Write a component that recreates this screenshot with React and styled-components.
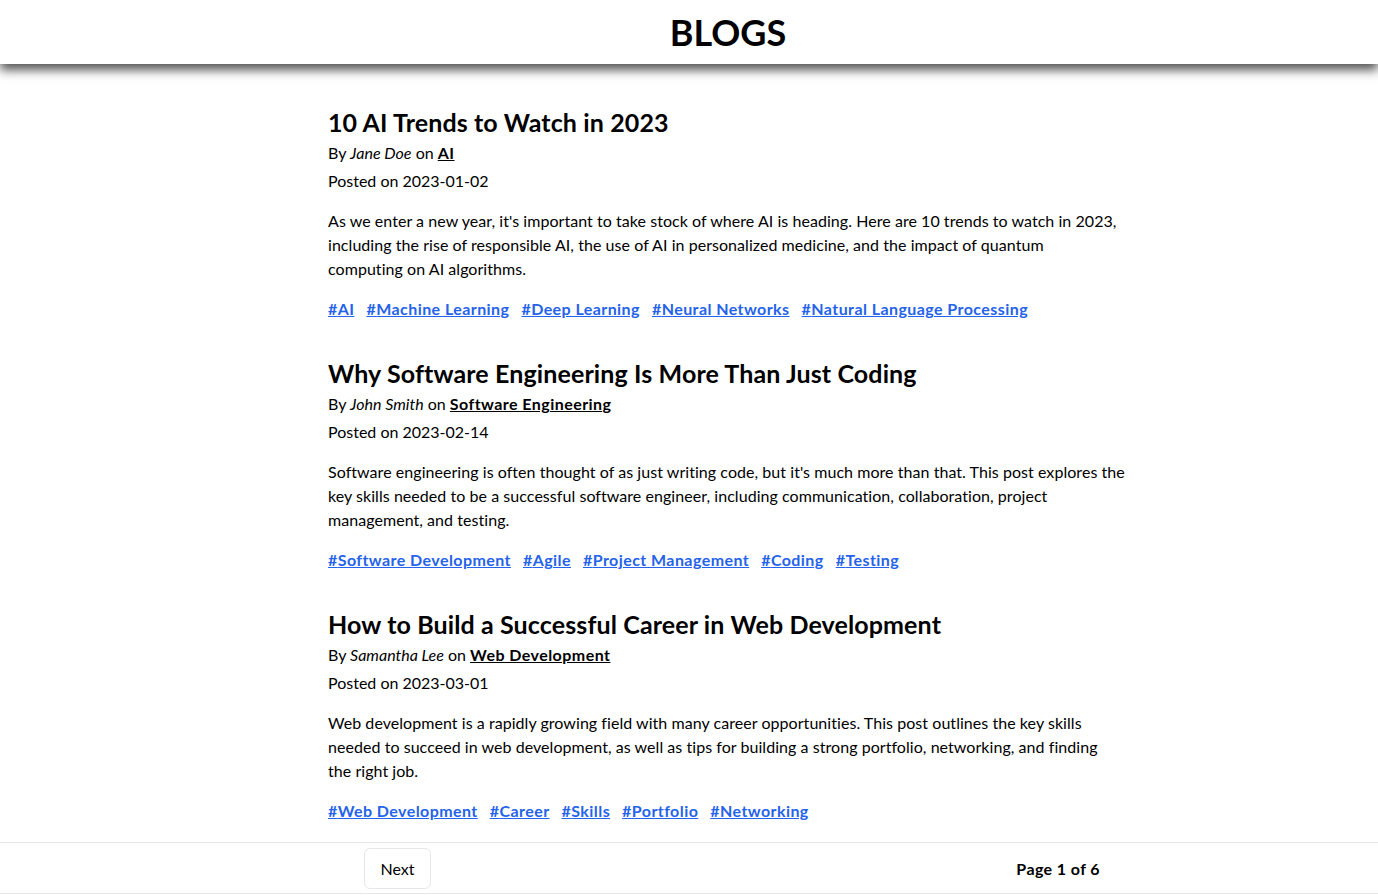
import React from "react";
import styled, { createGlobalStyle } from "styled-components";

// body text is kept in the same lines as the reference so it wraps the same way
const posts = [
  {
    title: "10 AI Trends to Watch in 2023",
    author: "Jane Doe",
    category: "AI",
    date: "2023-01-02",
    body: [
      "As we enter a new year, it's important to take stock of where AI is heading. Here are 10 trends to watch in 2023,",
      "including the rise of responsible AI, the use of AI in personalized medicine, and the impact of quantum",
      "computing on AI algorithms.",
    ],
    tags: ["AI", "Machine Learning", "Deep Learning", "Neural Networks", "Natural Language Processing"],
  },
  {
    title: "Why Software Engineering Is More Than Just Coding",
    author: "John Smith",
    category: "Software Engineering",
    date: "2023-02-14",
    body: [
      "Software engineering is often thought of as just writing code, but it's much more than that. This post explores the",
      "key skills needed to be a successful software engineer, including communication, collaboration, project",
      "management, and testing.",
    ],
    tags: ["Software Development", "Agile", "Project Management", "Coding", "Testing"],
  },
  {
    title: "How to Build a Successful Career in Web Development",
    author: "Samantha Lee",
    category: "Web Development",
    date: "2023-03-01",
    body: [
      "Web development is a rapidly growing field with many career opportunities. This post outlines the key skills",
      "needed to succeed in web development, as well as tips for building a strong portfolio, networking, and finding",
      "the right job.",
    ],
    tags: ["Web Development", "Career", "Skills", "Portfolio", "Networking"],
  },
];

export default function App() {
  return (
    <>
      <GlobalStyle />
      <Header>
        <Heading>BLOGS</Heading>
      </Header>
      <Main>
        <Column>
          {posts.map((post) => (
            <Post key={post.title}>
              <Title>{post.title}</Title>
              <Meta>
                By <Author>{post.author}</Author> on{" "}
                <Category href="#">{post.category}</Category>
              </Meta>
              <Meta>Posted on {post.date}</Meta>
              <Body>
                {post.body.map((line) => (
                  <Line key={line}>{line}</Line>
                ))}
              </Body>
              <Tags>
                {post.tags.map((tag) => (
                  <Tag key={tag} href="#">#{tag}</Tag>
                ))}
              </Tags>
            </Post>
          ))}
        </Column>
      </Main>
      <Footer>
        <FooterInner>
          <Button>Next</Button>
          <PageInfo>Page 1 of 6</PageInfo>
        </FooterInner>
      </Footer>
    </>
  );
}

const GlobalStyle = createGlobalStyle`
  html, body {
    margin: 0;
    background: #fff;
    color: #000;
    font-family: Lato, "Liberation Sans", sans-serif;
  }
  * {
    box-sizing: border-box;
  }
`;

/* the layout in the reference is centred on x=728, so every band has an extra left inset */
const Header = styled.header`
  height: 64px;
  padding-left: 78px;
  display: flex;
  align-items: center;
  justify-content: center;
  box-shadow: 0 6px 10px rgba(0, 0, 0, 0.68);
`;

const Heading = styled.h1`
  margin: 0;
  font-size: 36px;
  font-weight: 700;
  line-height: 40px;
`;

const Main = styled.main`
  padding: 43px 0 0 78px;
`;

const Column = styled.div`
  width: 800px;
  margin: 0 auto;
  display: flex;
  flex-direction: column;
  gap: 37px;
`;

const Post = styled.article`
  display: flex;
  flex-direction: column;
`;

const Title = styled.h2`
  margin: 0;
  font-size: 25px;
  font-weight: 700;
  letter-spacing: 0.12px;
  line-height: 30px;
  white-space: nowrap;
`;

const Meta = styled.p`
  margin: 4px 0 0;
  font-size: 16px;
  line-height: 24px;
`;

const Author = styled.em`
  font-style: italic;
`;

const Category = styled.a`
  color: #000;
  font-weight: 700;
  letter-spacing: 0.45px;
  text-decoration: underline;
`;

const Body = styled.p`
  margin: 16px 0 0;
  font-size: 16px;
  line-height: 24px;
`;

const Line = styled.span`
  display: block;
  white-space: nowrap;
  letter-spacing: 0.05px;
`;

const Tags = styled.div`
  margin-top: 16px;
  display: flex;
  flex-wrap: wrap;
  gap: 12px;
  line-height: 24px;
`;

const Tag = styled.a`
  color: #2563eb;
  font-size: 16px;
  font-weight: 700;
  letter-spacing: 0.43px;
  text-decoration: underline;
`;

const Footer = styled.footer`
  margin-top: 19px;
  padding-left: 78px;
  border-top: 1px solid #e5e7eb;
  border-bottom: 1px solid #e5e7eb;
`;

const FooterInner = styled.div`
  width: 772px;
  margin: 0 auto;
  padding: 5px 14px 4px 22px;
  display: flex;
  align-items: center;
  justify-content: space-between;
`;

const Button = styled.button`
  width: 67px;
  height: 41px;
  background: #fff;
  border: 1px solid #e5e7eb;
  border-radius: 6px;
  font-family: inherit;
  font-size: 16px;
  color: #000;
`;

const PageInfo = styled.span`
  font-size: 16px;
  font-weight: 700;
  letter-spacing: 0.4px;
`;
